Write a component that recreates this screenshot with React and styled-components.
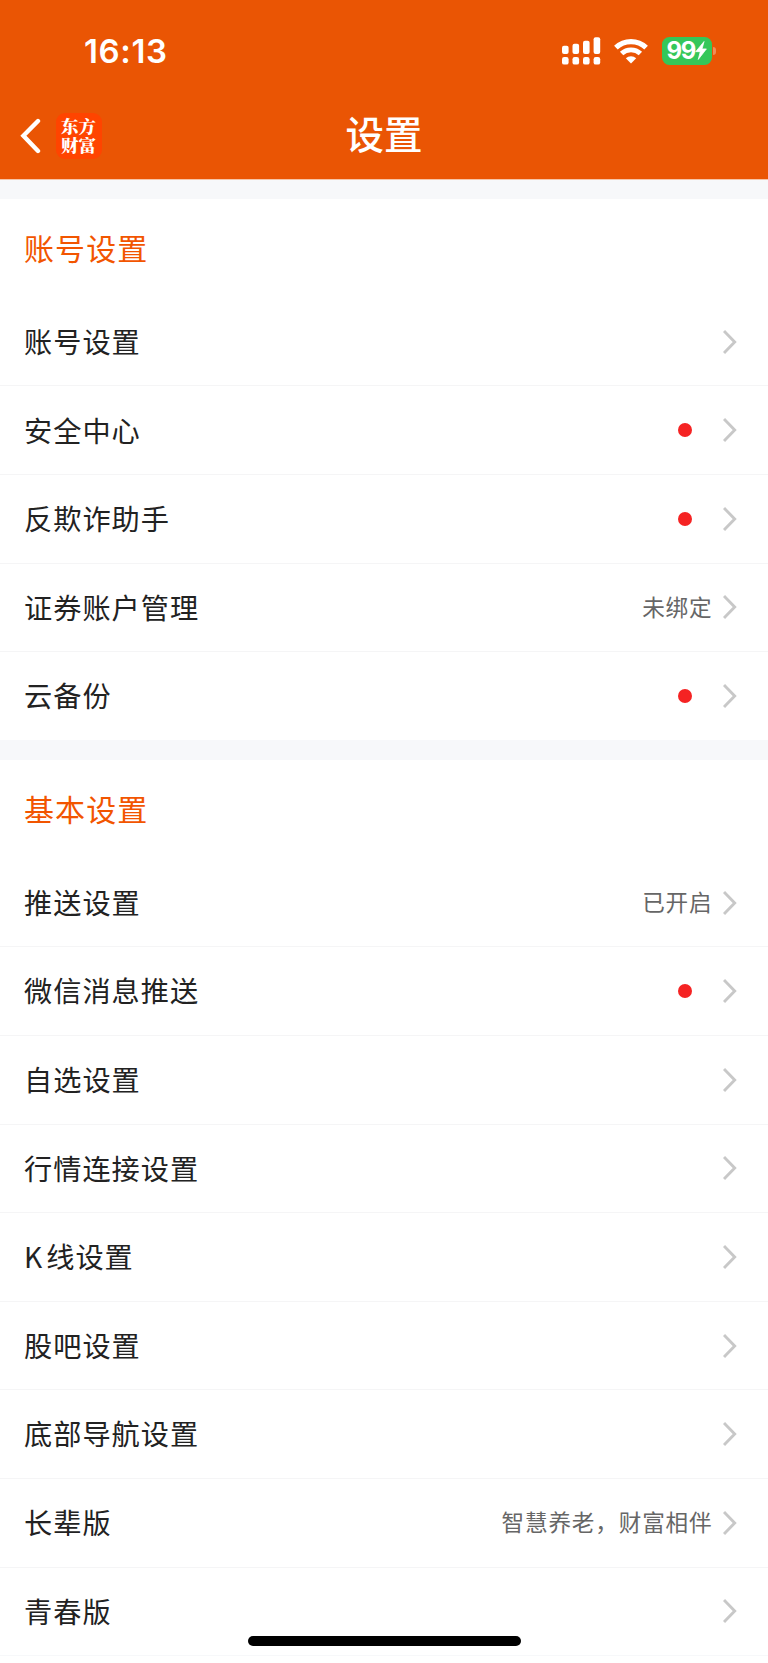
import React from "react";
import styled, { createGlobalStyle } from "styled-components";

const sections = [
  {
    title: "账号设置",
    items: [
      { label: "账号设置" },
      { label: "安全中心", dot: true },
      { label: "反欺诈助手", dot: true },
      { label: "证券账户管理", value: "未绑定" },
      { label: "云备份", dot: true },
    ],
  },
  {
    title: "基本设置",
    items: [
      { label: "推送设置", value: "已开启" },
      { label: "微信消息推送", dot: true },
      { label: "自选设置" },
      { label: "行情连接设置" },
      { label: "K线设置", latin: true },
      { label: "股吧设置" },
      { label: "底部导航设置" },
      { label: "长辈版", value: "智慧养老，财富相伴" },
      { label: "青春版" },
    ],
  },
];

const SignalIcon = () => (
  <svg width="39" height="28" viewBox="0 0 39 28" fill="#fff">
    <rect x="0" y="8.7" width="6.6" height="8.3" rx="2" />
    <rect x="10.5" y="6.7" width="6.6" height="10.3" rx="2" />
    <rect x="21" y="3.7" width="6.6" height="13.3" rx="2" />
    <rect x="31.6" y="0.3" width="6.6" height="16.7" rx="2" />
    <rect x="0" y="20" width="6.6" height="7.6" rx="2.2" />
    <rect x="10.5" y="20" width="6.6" height="7.6" rx="2.2" />
    <rect x="21" y="20" width="6.6" height="7.6" rx="2.2" />
    <rect x="31.6" y="20" width="6.6" height="7.6" rx="2.2" />
  </svg>
);

const WifiIcon = () => (
  <svg width="34" height="25" viewBox="0 0 34 25" fill="none">
    <path d="M1.9 8.7a21.8 21.8 0 0 1 30.2 0" stroke="#fff" strokeWidth="5.2" />
    <path d="M7.6 14.6a13.6 13.6 0 0 1 18.8 0" stroke="#fff" strokeWidth="4.8" />
    <path d="M11.8 19.3a7.6 7.6 0 0 1 10.4 0L17 24.5z" fill="#fff" />
  </svg>
);

const BoltIcon = () => (
  <svg width="12" height="19" viewBox="0 0 11 18">
    <path
      d="M8.4 0.5 0.5 10.1h4.3L2.9 17.5 10.6 7.5H6.5z"
      fill="#fff"
      stroke="#fff"
      strokeWidth="0.7"
      strokeLinejoin="round"
    />
  </svg>
);

const BackIcon = () => (
  <svg width="21" height="36" viewBox="0 0 21 36" fill="none">
    <path
      d="M18 3 3.4 17.8 18 33"
      stroke="#fff"
      strokeWidth="4.4"
      strokeLinecap="round"
      strokeLinejoin="miter"
    />
  </svg>
);

const Chevron = () => (
  <svg width="14" height="24" viewBox="0 0 14 24" fill="none">
    <path d="M1 1 11.7 12 1 23" stroke="#c8c8c8" strokeWidth="2.9" />
  </svg>
);

const App = () => {
  return (
    <Page>
      <GlobalStyle />
      <Header>
        <StatusBar>
          <Time>16:13</Time>
          <StatusIcons>
            <SignalIcon />
            <WifiIcon />
            <Battery>
              <BatteryBody>
                <span>99</span>
                <BoltIcon />
              </BatteryBody>
              <BatteryCap />
            </Battery>
          </StatusIcons>
        </StatusBar>
        <NavBar>
          <NavLeft>
            <BackIcon />
            <Logo>
              东方
              <br />
              财富
            </Logo>
          </NavLeft>
          <Title>设置</Title>
          <div />
        </NavBar>
      </Header>
      {sections.map((section) => (
        <Section key={section.title}>
          <SectionTitle>{section.title}</SectionTitle>
          {section.items.map(({ label, value, dot, latin }) => (
            <Row key={label}>
              <Label $latin={latin}>{label}</Label>
              {value && <Value>{value}</Value>}
              {dot && <Dot />}
              <Chevron />
            </Row>
          ))}
        </Section>
      ))}
      <HomeIndicator />
    </Page>
  );
};

const GlobalStyle = createGlobalStyle`
  * {
    box-sizing: border-box;
  }
  body {
    margin: 0;
    background: #fff;
  }
  svg {
    display: block;
    flex-shrink: 0;
  }
`;

const Page = styled.main`
  position: relative;
  width: 768px;
  height: 1663px;
  overflow: hidden;
  background: #fff;
  font-family: "Noto Sans CJK SC", sans-serif;
`;

const Header = styled.header`
  height: 180px;
  background: #ea5504;
  border-bottom: 1px solid #f6c4a8;
`;

const StatusBar = styled.div`
  display: flex;
  justify-content: space-between;
  height: 92px;
  padding: 37px 52.5px 0 84px;
`;

const Time = styled.div`
  color: #fff;
  font-family: Inter, sans-serif;
  font-size: 33px;
  font-weight: 600;
  line-height: 29px;
  letter-spacing: 0.6px;
`;

const StatusIcons = styled.div`
  display: flex;
  align-items: flex-start;
  color: #fff;
  svg + svg {
    margin: 2px 14px 0 13.5px;
  }
`;

const Battery = styled.div`
  display: flex;
  align-items: center;
  gap: 1.3px;
`;

const BatteryBody = styled.div`
  display: flex;
  align-items: center;
  justify-content: center;
  width: 49.5px;
  height: 27.5px;
  border-radius: 7.5px;
  background: #34c759;
  font-family: Inter, sans-serif;
  font-size: 24px;
  font-weight: 700;
  line-height: 28px;
  letter-spacing: -1.4px;
`;

const BatteryCap = styled.div`
  width: 2.7px;
  height: 8px;
  border-radius: 0 3px 3px 0;
  background: #f08d58;
`;

const NavBar = styled.nav`
  display: grid;
  grid-template-columns: 1fr auto 1fr;
  align-items: center;
  height: 87px;
  padding: 0 20px;
`;

const NavLeft = styled.div`
  display: flex;
  align-items: center;
  gap: 14.5px;
`;

const Logo = styled.div`
  width: 46px;
  height: 46px;
  padding-top: 3px;
  border-radius: 9px;
  background: #ff4400;
  color: #fff;
  font-family: "Noto Serif CJK SC", "Noto Sans CJK SC", serif;
  font-size: 17.5px;
  font-weight: 900;
  line-height: 19px;
  text-align: center;
`;

const Title = styled.h1`
  margin: 0;
  padding-bottom: 7px;
  color: #fff;
  font-size: 38.5px;
  font-weight: 500;
  line-height: 56px;
`;

const Section = styled.section`
  border-top: 19.2px solid #f7f8fa;
`;

const SectionTitle = styled.h2`
  display: flex;
  align-items: center;
  height: 98.9px;
  margin: 0;
  padding: 0 0 3px 24px;
  color: #f25500;
  font-size: 30px;
  font-weight: 400;
  letter-spacing: 1.1px;
`;

const Row = styled.div`
  display: flex;
  align-items: center;
  height: 88.6px;
  padding: 0 31.5px 0 24px;
  border-bottom: 1.5px solid #f5f5f6;
  &:last-child {
    border-bottom-color: #f7f8fa;
  }
`;

const Label = styled.span`
  flex: 1;
  padding-bottom: 2.4px;
  color: #222;
  font-size: 28.2px;
  letter-spacing: 1px;
  &::first-letter {
    letter-spacing: ${({ $latin }) => ($latin ? "4px" : "1px")};
  }
`;

const Value = styled.span`
  margin-right: 10px;
  padding-bottom: 1.6px;
  color: #666;
  font-size: 22.6px;
  letter-spacing: 0.85px;
`;

const Dot = styled.span`
  width: 14px;
  height: 14px;
  margin-right: 30.5px;
  border-radius: 50%;
  background: #f52323;
`;

const HomeIndicator = styled.div`
  position: absolute;
  bottom: 17px;
  left: 247.5px;
  width: 273.5px;
  height: 10px;
  border-radius: 5px;
  background: #000;
`;

export default App;
